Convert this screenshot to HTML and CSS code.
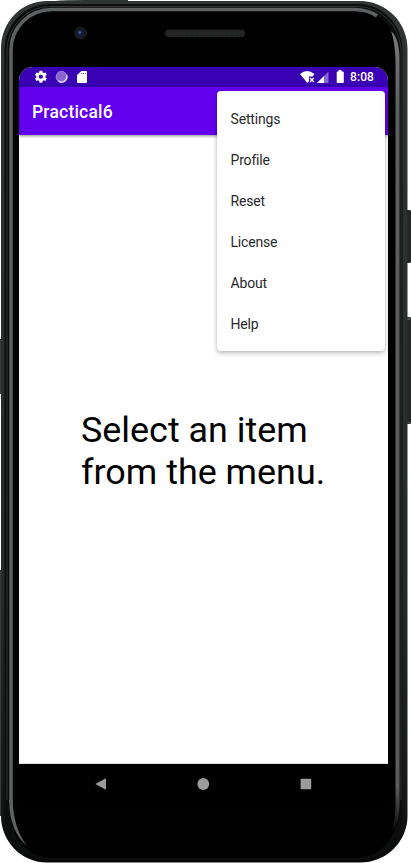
FILE: index.html
```html
<!DOCTYPE html>
<html lang="en">
<head>
<meta charset="utf-8">
<title>Practical6</title>
<link rel="stylesheet" href="styles.css">
</head>
<body>
<main class="phone">
  <svg class="shell" viewBox="0 0 411 863" aria-hidden="true">
    <defs>
      <linearGradient id="fade" x1="0" y1="0" x2="0" y2="1">
        <stop offset="0" stop-color="#77797a"/><stop offset=".1" stop-color="#5c5e60"/><stop offset=".94" stop-color="#5b5d5f"/><stop offset="1" stop-color="#5b5d5f" stop-opacity="0"/>
      </linearGradient>
      <linearGradient id="rim" x1="0" y1="0" x2="0" y2="1">
        <stop offset="0" stop-color="#303432"/><stop offset=".7" stop-color="#262928"/><stop offset=".93" stop-color="#151616"/><stop offset="1" stop-color="#070707"/>
      </linearGradient>
    </defs>
    <path fill="#393c3a" d="M0 339h2v55H0zM0 570h2v246H0z"/>
    <path fill="#242525" d="M406 210h4l1 1v51l-1 1h-4zM406 317h4l1 1v105l-1 1h-4z"/>
    <path fill="#555" d="M407 318h3v2h-3zM407 422h3v1h-3z"/>
    <path fill="#303432" d="M55 1Q65 0 85 0h43v2H55z"/>
    <path fill="url(#rim)" d="M47 1H360A47.500 48 0 0 1 407.500 49V816A47.500 46.500 0 0 1 360 862.500H47A46 46.500 0 0 1 1 816V48A46 47 0 0 1 47 1z"/>
    <path fill="#0c0d0d" d="M50 4H358A44.500 46 0 0 1 402.500 50V816A44.500 44 0 0 1 358 860H49A44.500 44 0 0 1 4.500 816V50A45 46 0 0 1 50 4z"/>
    <path class="groove" d="M50 6.500H358A43 45 0 0 1 401 51V800M7 800V51A43 44.500 0 0 1 50 6.500"/>
    <path fill="#010101" d="M52 9H356A41 43 0 0 1 397 52V816A41 42 0 0 1 356 858H52A41 42 0 0 1 11 816V52A41 43 0 0 1 52 9z"/>
    <path class="shine" d="M11 802V50A41 40.500 0 0 1 52 9.500H354Q368 9.500 377 16"/>
    <path fill="url(#fade)" d="M391 31Q399.500 38 399.500 60V805Q399 823 391 834Q395.500 821 395.500 805V60Q395 42 391 31z"/>
    <path fill="#5f6263" d="M9.250 800h3.500Q13 827 27 846Q9.250 831 9.250 800z"/>
    <circle cx="80.500" cy="33" r="6.500" fill="#181919"/>
    <circle cx="80.500" cy="33" r="3.700" fill="#151d38"/>
    <circle cx="79.800" cy="32.500" r="1.400" fill="#3d589b"/>
    <rect x="165" y="29.500" width="80" height="7.500" rx="3.500" fill="#222323"/>
    <path stroke="#2b2c2c" stroke-width="4" stroke-dasharray="1 1.500" d="M169 33.500h72"/>
  </svg>
  <section class="screen">
    <header class="status">
      <svg class="icons-left" viewBox="0 0 56 16" aria-hidden="true">
        <path class="white" fill-rule="evenodd" d="m6.300 1.700.3 1.700 1.200.7 1.600-.6 1.400 2.400-1.400 1.100V8.400l1.400 1.100-1.400 2.400-1.600-.6-1.200.7-.3 1.700H3.500L3.200 12 2 11.300l-1.600.6L-1 9.500.4 8.400V7L-1 5.900.4 3.500 2 4.100l1.200-.7.3-1.700zM4.900 5.600a2.100 2.100 0 1 0 0 4.200 2.100 2.100 0 0 0 0-4.200z"/>
        <circle cx="25.500" cy="7.800" r="5.800" fill="#8a66d2"/>
        <circle cx="25.500" cy="7.800" r="5.300" fill="none" stroke="#a58adf" stroke-width=".8"/>
        <path fill="none" stroke="#ddd2f5" stroke-width="1.500" d="M30.800 5.800q1 5.500-4.500 7.300-2.400.3-4-1.300"/>
        <path class="white" d="M45.500 2H50q1 0 1 1v10q0 1-1 1h-8q-1 0-1-1V6z"/>
        <path stroke="#7756cb" stroke-width="1" stroke-dasharray="1.200 .8" d="M45 4.500h5"/>
      </svg>
      <div class="status-right">
        <svg class="icons-right" viewBox="0 0 45 16" aria-hidden="true">
          <path class="white" d="M0 5Q7-1 14.500 5l-2 2.500H9V12l-1.700 2z"/>
          <path stroke="#fff" stroke-width="1.300" d="m10 9 3.800 4M13.800 9 10 13"/>
          <path fill="#8468d1" d="M28.500 2.500V14H17z"/>
          <path class="white" d="M24 7v7h-7z"/>
          <path class="white" d="M38.500 1h3v1.500H43q.8 0 .8.800v10q0 .7-.8.700h-5.500q-.8 0-.8-.7v-10q0-.8.800-.8h1z"/>
        </svg>
        <span class="clock">8:08</span>
      </div>
    </header>
    <div class="toolbar"><h1>Practical6</h1></div>
    <div class="content"><p>Select an item<br>from the menu.</p></div>
    <nav class="navigation" aria-label="System">
      <svg viewBox="0 0 12 12"><path d="M.3 6 11 .2v11.600z"/></svg>
      <svg viewBox="0 0 12 12"><circle cx="5.300" cy="6" r="5.900"/></svg>
      <svg viewBox="0 0 12 12"><rect x=".6" y=".7" width="10.600" height="10.600" rx=".7"/></svg>
    </nav>
    <ul class="menu">
      <li>Settings</li><li>Profile</li><li>Reset</li><li>License</li><li>About</li><li>Help</li>
    </ul>
  </section>
</main>
</body>
</html>
```
FILE: styles.css
```css
* { box-sizing: border-box; }
body { margin: 0; background: #fff; font-family: Roboto, "Liberation Sans", sans-serif; }
.phone { position: relative; width: 411px; height: 863px; padding: 67px 23px 59px 19px; overflow: hidden; }
.shell { position: absolute; inset: 0; width: 411px; height: 863px; }
.groove { fill: none; stroke: #303332; stroke-width: 1; }
.shine { fill: none; stroke: #5f6263; stroke-width: 3.500; }
.screen { position: relative; display: flex; flex-direction: column; width: 369px; height: 737px; background: #fff; border-radius: 14px 14px 0 0; overflow: hidden; }
.status { height: 20px; flex: none; display: flex; justify-content: space-between; align-items: flex-start; padding: 2px 14px 0 17px; background: #3900b4; color: #fff; }
.icons-left { width: 56px; height: 16px; overflow: visible; }
.icons-right { width: 45px; height: 16px; }
.white { fill: #fff; }
.status-right { display: flex; gap: 5px; }
.clock { font-size: 12px; line-height: 17px; font-weight: 500; letter-spacing: .1px; }
.toolbar { height: 48px; flex: none; display: flex; align-items: center; padding: 2px 13px 0; background: #6200ee; box-shadow: 0 1px 3px #0007; z-index: 1; }
h1 { margin: 0; color: #fff; font-size: 17.500px; line-height: 22px; font-weight: 500; letter-spacing: .2px; }
.content { height: 629px; flex: none; padding: 274px 0 0 62px; border-bottom: 1px solid #ddd; }
.content p { margin: 0; color: #000; font-size: 35.900px; line-height: 42px; white-space: nowrap; }
.navigation { height: 40px; flex: none; display: flex; justify-content: space-between; align-items: center; padding: 0 76px; background: #000; }
.navigation svg { width: 12px; height: 12px; fill: #9b9b9b; overflow: visible; }
.menu { position: absolute; z-index: 2; top: 24px; left: 197.500px; width: 168px; height: 260px; margin: 0; padding: 7px 14px; list-style: none; background: #fff; border-radius: 4px; box-shadow: 0 2px 5px #0004, 0 0 2px #0002; }
.menu li { height: 41px; line-height: 42px; color: #2a2a2a; font-size: 14px; letter-spacing: -.18px; }
```
